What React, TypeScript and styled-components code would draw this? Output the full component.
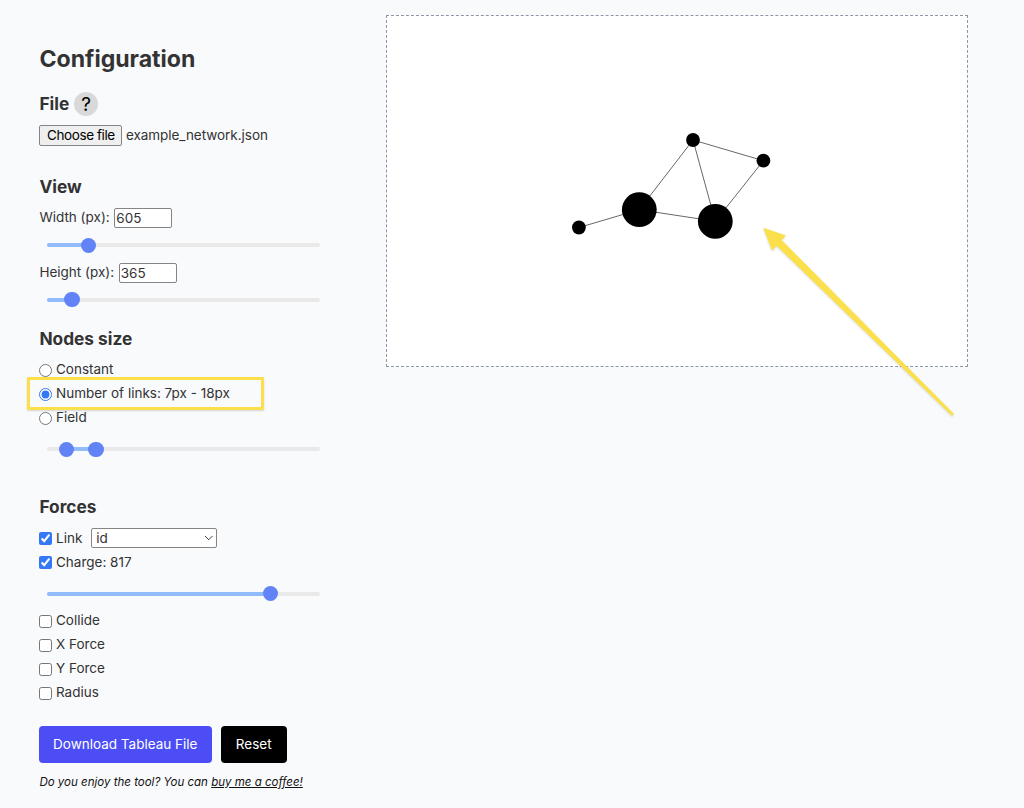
import React from "react";
import styled, { createGlobalStyle } from "styled-components";

const theme = {
    colors: {
        background: "#f9fafc",
        text: "#333333",
        track: "#e9e9e9",
        range: "#91bbfb",
        handle: "#6183f5",
        accent: "#3478f6",
        primary: "#4c4df5",
        marker: "#fbe04b",
    },
}

const nodes = [
    { id: "a", x: 191.9, y: 211.5, r: 6.9 },
    { id: "b", x: 252.3, y: 193.7, r: 17.4 },
    { id: "c", x: 328.3, y: 205.3, r: 17.4 },
    { id: "d", x: 306, y: 124, r: 6.9 },
    { id: "e", x: 376.4, y: 144.7, r: 6.9 },
]

const links = [[0, 1], [1, 2], [1, 3], [2, 3], [2, 4], [3, 4]]

type SliderProps = {
    from?: number
    to: number
    range?: boolean
}

const Slider = ({ from = 0, to, range }: SliderProps) => {
    return (
        <Rail>
            <Range style={{ left: `${from}%`, width: `${to - from}%` }} />
            {range && <Handle style={{ left: `${from}%` }} />}
            <Handle style={{ left: `${to}%` }} />
        </Rail>
    )
}

export default function App() {
    return (
        <>
            <GlobalStyle />
            <Page>
                <Sidebar>
                    <Title>Configuration</Title>

                    <Heading $top={13}>File <Help>?</Help></Heading>
                    <FileRow>
                        <FileButton type="button">Choose file</FileButton>
                        <span>example_network.json</span>
                    </FileRow>

                    <Heading $top={28}>View</Heading>
                    <Row>Width (px):<NumberField defaultValue="605" /></Row>
                    <SliderBox><Slider to={15.2} /></SliderBox>
                    <Row>Height (px):<NumberField defaultValue="365" /></Row>
                    <SliderBox><Slider to={9.2} /></SliderBox>

                    <Heading $top={12}>Nodes size</Heading>
                    <Option><Toggle type="radio" name="size" />Constant</Option>
                    <Option>
                        <Toggle type="radio" name="size" defaultChecked />Number of links: 7px - 18px
                        <Highlight />
                    </Option>
                    <Option><Toggle type="radio" name="size" />Field</Option>
                    <SliderBox $top={4}><Slider from={7.1} to={18} range /></SliderBox>

                    <Heading $top={31}>Forces</Heading>
                    <Option>
                        <Toggle type="checkbox" defaultChecked />Link
                        <SelectBox>
                            <Select defaultValue="id"><option>id</option></Select>
                            <Chevron viewBox="0 0 10 6"><path d="M1 1l4 4 4-4" /></Chevron>
                        </SelectBox>
                    </Option>
                    <Option><Toggle type="checkbox" defaultChecked />Charge: 817</Option>
                    <SliderBox $top={4}><Slider to={81.8} /></SliderBox>
                    {["Collide", "X Force", "Y Force", "Radius"].map((name) => (
                        <Option key={name}><Toggle type="checkbox" />{name}</Option>
                    ))}

                    <Actions>
                        <Button $color={theme.colors.primary} $width={172.5}>Download Tableau File</Button>
                        <Button $color="#000000" $width={65.5}>Reset</Button>
                    </Actions>
                    <Note>Do you enjoy the tool? You can <a href="#">buy me a coffee!</a></Note>
                </Sidebar>

                <Canvas>
                    <svg width="580" height="350">
                        {links.map(([a, b]) => (
                            <line key={`${a}-${b}`} x1={nodes[a].x} y1={nodes[a].y} x2={nodes[b].x} y2={nodes[b].y} stroke="#000" strokeOpacity="0.75" strokeWidth="0.8" />
                        ))}
                        {nodes.map((n) => <circle key={n.id} cx={n.x} cy={n.y} r={n.r} />)}
                    </svg>
                    <Arrow width="200" height="200" viewBox="0 0 200 200">
                        <path d="M4 8.5L25.2 15.7L21.2 20L193.5 194L192 195.4L16.6 25.3L12.3 30Z" />
                    </Arrow>
                </Canvas>
            </Page>
        </>
    )
}


const GlobalStyle = createGlobalStyle`
    * {
        box-sizing: border-box;
    }

    body {
        margin: 0;
        overflow: hidden;
        background-color: ${theme.colors.background};
        color: ${theme.colors.text};
        font-family: "Inter", sans-serif;
        font-size: 13.5px;
    }
`

const Page = styled.main`
    height: 808px;
    display: flex;
    align-items: flex-start;
`

const Sidebar = styled.section`
    width: 386px;
    padding: 38px 0 0 39.4px;
    display: flex;
    flex-direction: column;
    flex-shrink: 0;
`

const Title = styled.h1`
    margin: 0;
    height: 41px;
    font-weight: 700;
    font-size: 23.1px;
    line-height: 43px;
`

const Heading = styled.h2<{ $top: number }>`
    margin: ${({ $top }) => $top}px 0 7px;
    height: 24px;
    padding-bottom: 2px;
    display: flex;
    align-items: center;
    gap: 5px;
    font-weight: 700;
    font-size: 17.3px;
`

const Help = styled.span`
    width: 24px;
    height: 24px;
    margin-top: 2px;
    flex-shrink: 0;
    border-radius: 50%;
    background-color: #d9d9d9;
    color: #000000;
    font-weight: 400;
    font-size: 19px;
    line-height: 25px;
    text-align: center;
`

const Row = styled.div`
    position: relative;
    height: 24px;
    padding-bottom: 2px;
    display: flex;
    align-items: center;
    white-space: nowrap;
`

const FileRow = styled(Row)`
    gap: 3.5px;
    margin-top: 1px;
    height: 23px;
    letter-spacing: -0.04px;
`

const FileButton = styled.button`
    width: 83px;
    height: 21px;
    margin-top: 2px;
    padding: 0 0 1px;
    border: 1px solid #858585;
    border-radius: 2px;
    background-color: #efefef;
    color: #000000;
    font: inherit;
    letter-spacing: -0.4px;
    white-space: nowrap;
    flex-shrink: 0;
`

const NumberField = styled.input`
    width: 58px;
    height: 20px;
    margin: 2px 0 0 4.6px;
    padding: 0 1px;
    border: 1px solid #858585;
    border-radius: 2px;
    background-color: #ffffff;
    color: ${theme.colors.text};
    font: inherit;
`

const Option = styled(Row).attrs({ as: "label" })``

const Toggle = styled.input`
    width: 13px;
    height: 13px;
    margin: 2px 4px 0 -0.4px;
    accent-color: ${theme.colors.accent};
`

const Highlight = styled.span`
    position: absolute;
    top: -5.4px;
    left: -12px;
    width: 237px;
    height: 33px;
    border: 3px solid ${theme.colors.marker};
    border-radius: 1px;
    box-shadow: 0 1px 2px rgba(0, 0, 0, 0.15);
`

const SliderBox = styled.div<{ $top?: number }>`
    margin-top: ${({ $top = 0 }) => $top}px;
    height: 30.5px;
    padding-left: 7.6px;
    display: flex;
    align-items: center;
`

const Rail = styled.div`
    position: relative;
    width: 273px;
    height: 4px;
    border-radius: 3px;
    background-color: ${theme.colors.track};
`

const Range = styled.div`
    position: absolute;
    height: 4px;
    border-radius: 3px;
    background-color: ${theme.colors.range};
`

const Handle = styled.div`
    position: absolute;
    top: -5.7px;
    width: 15.4px;
    height: 15.4px;
    margin-left: -7.7px;
    border-radius: 50%;
    background-color: ${theme.colors.handle};
`

const SelectBox = styled.span`
    position: relative;
    margin-left: 9px;
    height: 20px;
`

const Select = styled.select`
    appearance: none;
    width: 126px;
    height: 20px;
    padding: 0 4px;
    border: 1px solid #858585;
    border-radius: 2px;
    background-color: #ffffff;
    color: ${theme.colors.text};
    font: inherit;
    display: block;
`

const Chevron = styled.svg`
    position: absolute;
    top: 7.5px;
    right: 4px;
    width: 9.5px;
    height: 5.7px;
    fill: none;
    stroke: #333333;
    stroke-width: 1;
`

const Actions = styled.div`
    display: flex;
    gap: 9.5px;
    margin: 21px 0 0 -0.4px;
`

const Button = styled.button<{ $color: string; $width: number }>`
    width: ${({ $width }) => $width}px;
    height: 37px;
    padding: 0 0 1px;
    border: none;
    border-radius: 4px;
    background-color: ${({ $color }) => $color};
    color: #ffffff;
    font: inherit;
    white-space: nowrap;
`

const Note = styled.p`
    margin: 9px 0 0;
    height: 20px;
    color: #111111;
    font-style: italic;
    font-size: 11.53px;
    line-height: 20px;

    a {
        color: inherit;
    }
`

const Canvas = styled.section`
    position: relative;
    width: 582px;
    height: 352px;
    margin-top: 15px;
    border: 1px dashed #8c96a5;
    background-color: #ffffff;
    flex-shrink: 0;
`

const Arrow = styled.svg`
    position: absolute;
    top: 204px;
    left: 373px;
    fill: ${theme.colors.marker};
    stroke: ${theme.colors.marker};
    stroke-width: 1;
    stroke-linejoin: round;
    filter: drop-shadow(0 1px 1px rgba(0, 0, 0, 0.15));
`
